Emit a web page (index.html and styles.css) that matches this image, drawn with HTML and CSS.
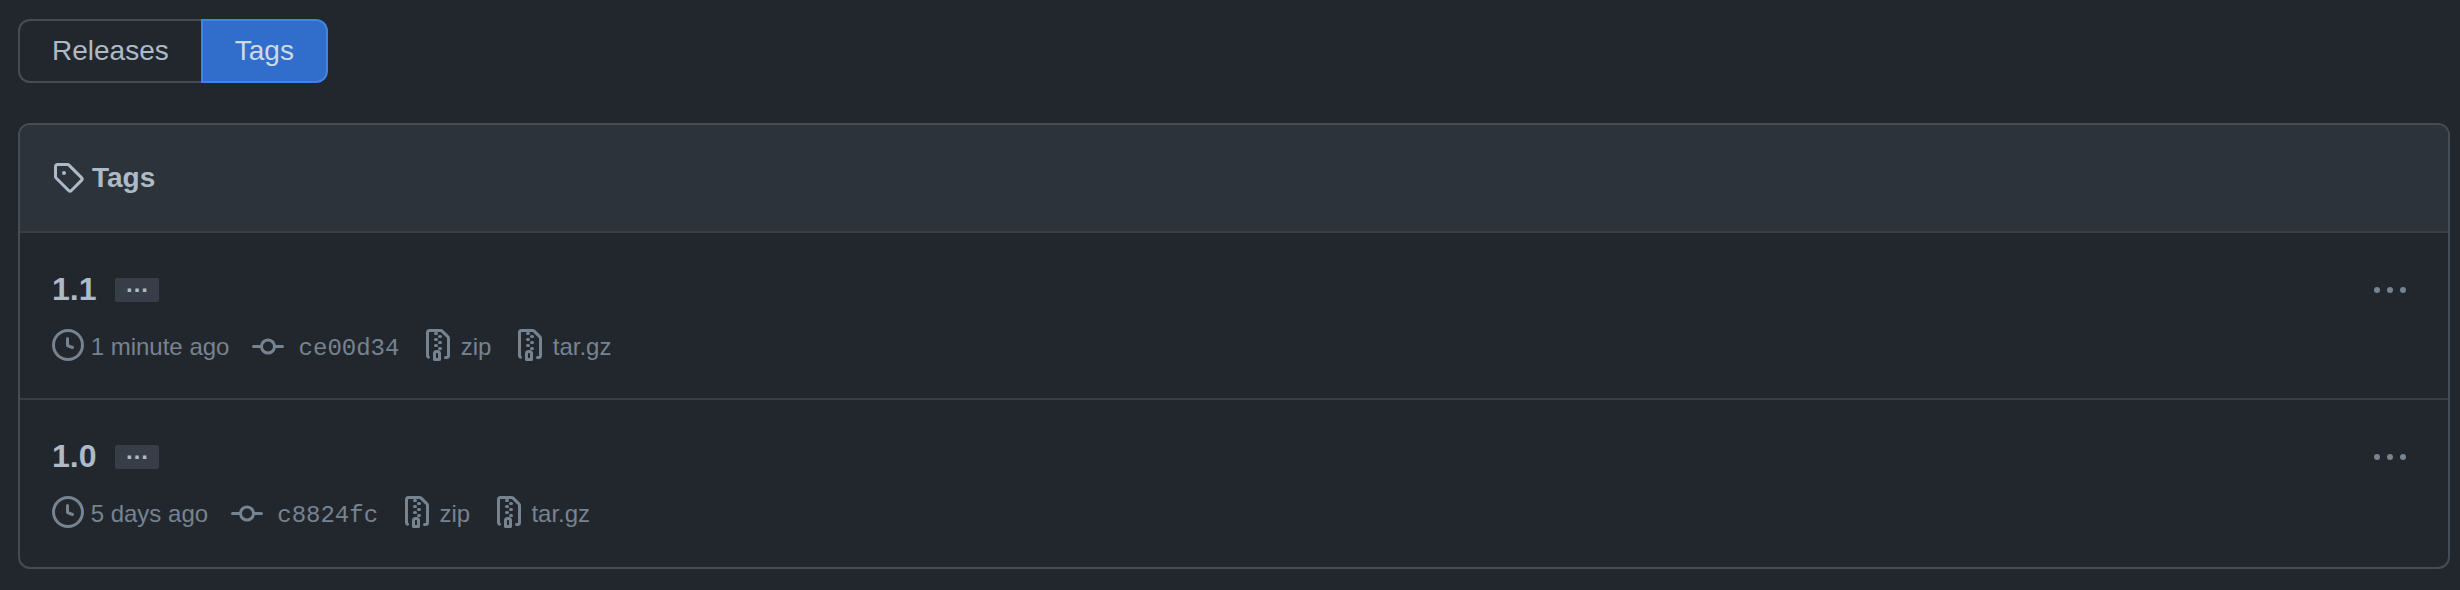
FILE: index.html
```html
<!DOCTYPE html>
<html lang="en">
<head>
<meta charset="utf-8">
<title>Tags</title>
<link rel="stylesheet" href="styles.css">
</head>
<body>
<svg class="sprite" aria-hidden="true">
  <symbol id="tag" viewBox="0 0 16 16"><path fill-rule="evenodd" d="M2.5 7.775V2.75a.25.25 0 01.25-.25h5.025a.25.25 0 01.177.073l6.25 6.25a.25.25 0 010 .354l-5.025 5.025a.25.25 0 01-.354 0l-6.25-6.25a.25.25 0 01-.073-.177zm-1.5 0V2.75C1 1.784 1.784 1 2.75 1h5.025c.464 0 .91.184 1.238.513l6.25 6.25a1.75 1.75 0 010 2.474l-5.026 5.026a1.75 1.75 0 01-2.474 0l-6.25-6.25A1.75 1.75 0 011 7.775zM6 5a1 1 0 100 2 1 1 0 000-2z"/></symbol>
  <symbol id="clock" viewBox="0 0 16 16"><path fill-rule="evenodd" d="M1.5 8a6.5 6.5 0 1113 0 6.5 6.5 0 01-13 0zM8 0a8 8 0 100 16A8 8 0 008 0zm.5 4.75a.75.75 0 00-1.5 0v3.5a.75.75 0 00.471.696l2.5 1a.75.75 0 00.557-1.392L8.5 7.742V4.75z"/></symbol>
  <symbol id="commit" viewBox="0 0 16 16"><path fill-rule="evenodd" d="M10.5 7.75a2.5 2.5 0 11-5 0 2.5 2.5 0 015 0zm1.43.75a4.002 4.002 0 01-7.86 0H.75a.75.75 0 110-1.5h3.32a4.001 4.001 0 017.86 0h3.32a.75.75 0 110 1.5h-3.32z"/></symbol>
  <symbol id="file-zip" viewBox="0 0 16 16"><path fill-rule="evenodd" d="M3.5 1.75a.25.25 0 01.25-.25h3a.75.75 0 000 1.5h.5a.75.75 0 000-1.5h2.086a.25.25 0 01.177.073l2.914 2.914a.25.25 0 01.073.177v8.586a.25.25 0 01-.25.25h-.5a.75.75 0 000 1.5h.5A1.75 1.75 0 0014 13.25V4.664c0-.464-.184-.909-.513-1.237L10.573.513A1.75 1.75 0 009.336 0H3.75A1.75 1.75 0 002 1.75v11.5c0 .649.353 1.214.874 1.515a.75.75 0 10.752-1.298.25.25 0 01-.126-.217V1.75zM8.75 3a.75.75 0 000 1.5h.5a.75.75 0 000-1.5h-.5zM6 5.25a.75.75 0 01.75-.75h.5a.75.75 0 010 1.5h-.5A.75.75 0 016 5.25zm2 1.5A.75.75 0 018.75 6h.5a.75.75 0 010 1.5h-.5A.75.75 0 018 6.75zm-1.25.75a.75.75 0 000 1.5h.5a.75.75 0 000-1.5h-.5zM8 9.75A.75.75 0 018.75 9h.5a.75.75 0 010 1.5h-.5A.75.75 0 018 9.75zm-.75.75a1.75 1.75 0 00-1.75 1.75v3c0 .414.336.75.75.75h2.5a.75.75 0 00.75-.75v-3a1.75 1.75 0 00-1.75-1.75h-.5zM7 12.25a.25.25 0 01.25-.25h.5a.25.25 0 01.25.25v2.25H7v-2.25z"/></symbol>
  <symbol id="kebab" viewBox="0 0 16 16"><circle cx="1.5" cy="7.5" r="1.5"/><circle cx="8" cy="7.5" r="1.5"/><circle cx="14.5" cy="7.5" r="1.5"/></symbol>
</svg>
<nav class="subnav">
  <a class="subnav-item">Releases</a><a class="subnav-item selected">Tags</a>
</nav>
<main class="box">
  <header class="box-header">
    <svg class="icon"><use href="#tag"/></svg>
    <h2 class="box-title">Tags</h2>
  </header>
  <section class="row">
    <div class="details">
      <div class="title-line"><h4 class="name">1.1</h4><button class="expander">…</button></div>
      <ul class="meta">
        <li class="meta-item"><svg class="icon"><use href="#clock"/></svg><span>1 minute ago</span></li>
        <li class="meta-item commit"><svg class="icon"><use href="#commit"/></svg><span class="sha">ce00d34</span></li>
        <li class="meta-item"><svg class="icon"><use href="#file-zip"/></svg><span>zip</span></li>
        <li class="meta-item"><svg class="icon"><use href="#file-zip"/></svg><span>tar.gz</span></li>
      </ul>
    </div>
    <svg class="icon kebab"><use href="#kebab"/></svg>
  </section>
  <section class="row">
    <div class="details">
      <div class="title-line"><h4 class="name">1.0</h4><button class="expander">…</button></div>
      <ul class="meta">
        <li class="meta-item"><svg class="icon"><use href="#clock"/></svg><span>5 days ago</span></li>
        <li class="meta-item commit"><svg class="icon"><use href="#commit"/></svg><span class="sha">c8824fc</span></li>
        <li class="meta-item"><svg class="icon"><use href="#file-zip"/></svg><span>zip</span></li>
        <li class="meta-item"><svg class="icon"><use href="#file-zip"/></svg><span>tar.gz</span></li>
      </ul>
    </div>
    <svg class="icon kebab"><use href="#kebab"/></svg>
  </section>
</main>
</body>
</html>
```
FILE: styles.css
```css
* { box-sizing: border-box; }
body {
  margin: 0;
  padding: 19px 10px 0 18px;
  background: #22272e;
  color: #adbac7;
  font: 28px/40px "Liberation Sans", Arial, sans-serif;
}
.sprite { display: none; }
.icon { display: block; flex: none; width: 32px; height: 32px; fill: currentColor; }
.subnav { display: flex; height: 64px; margin-bottom: 40px; }
.subnav-item {
  padding: 10px 32px;
  border: 2px solid #444c56;
  border-right: 0;
  border-radius: 12px 0 0 12px;
}
.subnav-item.selected {
  border: 2px solid #4184e4;
  border-radius: 0 12px 12px 0;
  background: #316dca;
  color: #cdd9e5;
}
.box { height: 446px; border: 2px solid #444c56; border-radius: 12px; overflow: hidden; }
.box-header {
  display: flex;
  align-items: center;
  gap: 8px;
  height: 108px;
  padding: 0 32px;
  border-bottom: 2px solid #373e47;
  background: #2d333b;
}
.box-header .icon { margin-bottom: 2px; }
.box-title { margin: 0; font-size: 28px; line-height: 40px; }
.row { display: flex; justify-content: space-between; height: 165px; padding: 36px 42px 0 32px; }
.row + .row { height: 169px; border-top: 2px solid #373e47; }
.title-line { display: flex; align-items: flex-start; height: 60px; }
.name { width: 63px; margin: 0; font-size: 32px; line-height: 40px; }
.expander {
  height: 24px;
  margin: 9px 0 0;
  padding: 0 10px 12px;
  border: 0;
  border-radius: 2px;
  background: #373e47;
  color: #adbac7;
  font: bold 24px/12px "Liberation Sans", Arial, sans-serif;
}
.meta {
  display: flex;
  gap: 22.67px;
  margin: 0;
  padding: 0;
  list-style: none;
  color: #768390;
  font-size: 24px;
  line-height: 36px;
}
.meta-item { display: flex; gap: 6.67px; }
.meta-item.commit { gap: 14.5px; }
.commit .icon { margin-top: 2px; }
.sha { padding-top: 2px; font-family: "Liberation Mono", monospace; }
.kebab { margin-top: 6px; color: #768390; }
```
